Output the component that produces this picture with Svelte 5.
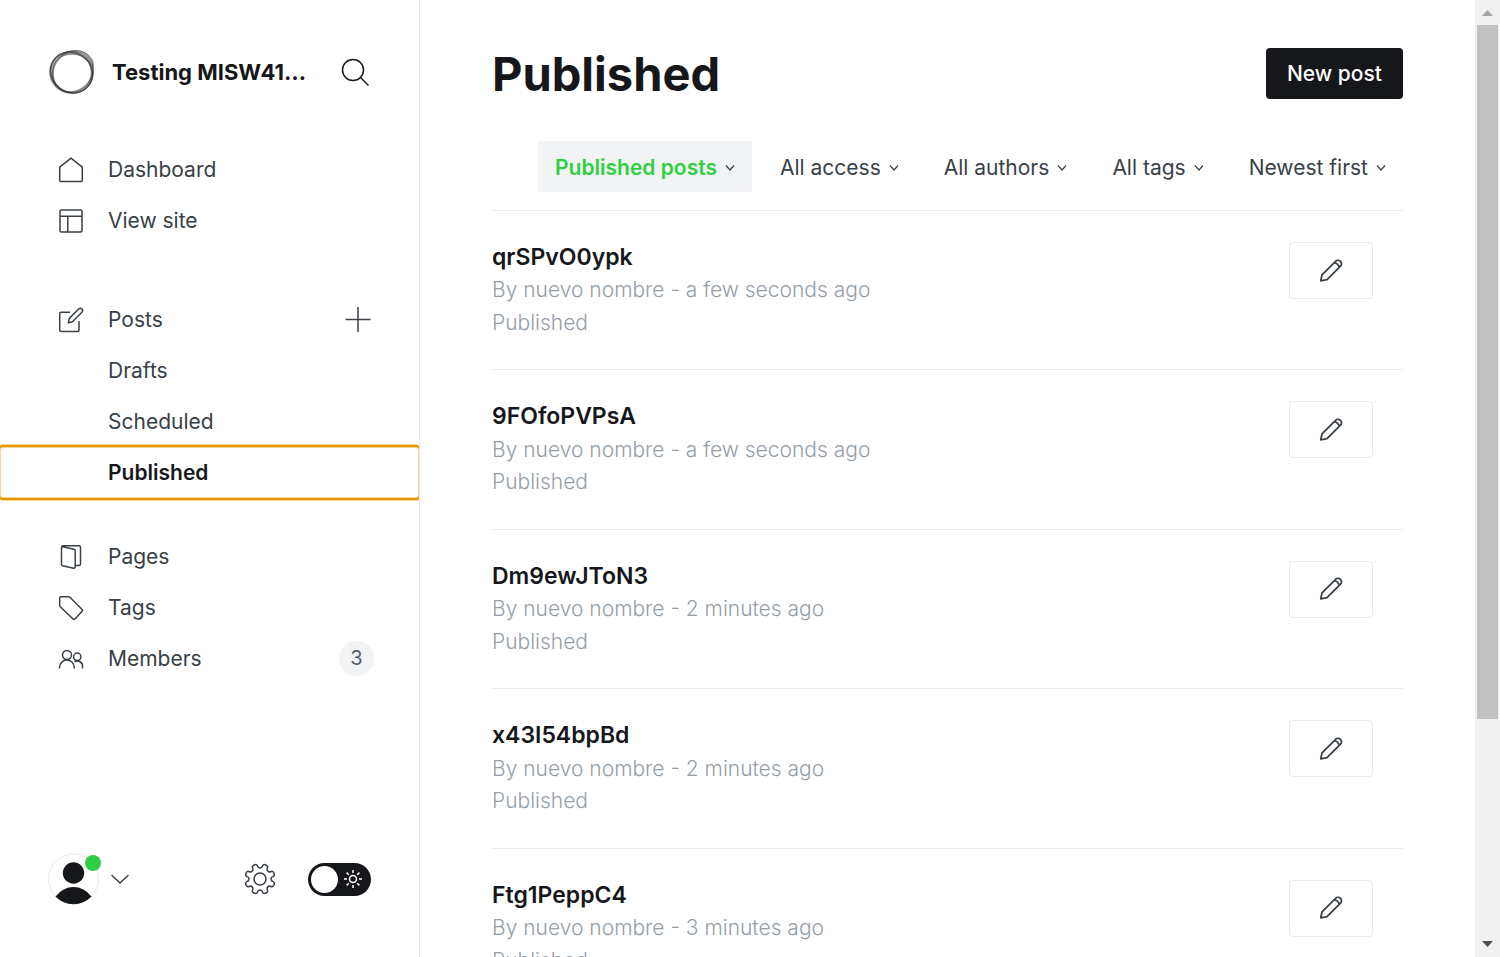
<script>
  const posts = [
    { title: 'qrSPvO0ypk', time: 'a few seconds ago' },
    { title: '9FOfoPVPsA', time: 'a few seconds ago' },
    { title: 'Dm9ewJToN3', time: '2 minutes ago' },
    { title: 'x43I54bpBd', time: '2 minutes ago' },
    { title: 'Ftg1PeppC4', time: '3 minutes ago' }
  ];
  const filters = ['Published posts', 'All access', 'All authors', 'All tags', 'Newest first'];

  // Outline of the eight-toothed settings gear, centred on 16,16
  const gear = (() => {
    const points = [];
    for (let i = 0; i < 8; i++) {
      for (const [offset, radius] of [[-13, 11.6], [-10, 15.4], [10, 15.4], [13, 11.6], [22.5, 11]]) {
        const angle = ((i * 45 + 22.5 + offset) * Math.PI) / 180;
        points.push([16 + radius * Math.cos(angle), 16 + radius * Math.sin(angle)]);
      }
    }
    const mid = (a, b) => `${((a[0] + b[0]) / 2).toFixed(2)} ${((a[1] + b[1]) / 2).toFixed(2)}`;
    let d = `M${mid(points[points.length - 1], points[0])}`;
    points.forEach((p, i) => {
      d += `Q${p[0].toFixed(2)} ${p[1].toFixed(2)} ${mid(p, points[(i + 1) % points.length])}`;
    });
    return d + 'Z';
  })();
</script>

<div class="app">
  <aside class="sidebar">
    <header class="brand">
      <svg class="logo" viewBox="0 0 48 48" fill="none" stroke="#222">
        <path d="M24 3C12 3 1.500 12 1.500 24S11 45.500 24 45.500 45.500 36 45.500 24 36 3 24 3ZM25 6.500C36 6.500 43 14 43 25S35 44 24 44 5 36 5 24 13 6.500 25 6.500Z" fill="#444" fill-opacity=".5" fill-rule="evenodd" stroke-opacity=".4" stroke-width=".7" />
        <ellipse cx="25" cy="23.500" rx="21.800" ry="19" transform="rotate(-48 25 23.500)" stroke-opacity=".45" stroke-width="1.800" />
        <ellipse cx="23.500" cy="24.500" rx="21.600" ry="19.800" transform="rotate(35 23.500 24.500)" stroke-opacity=".65" stroke-width="1.500" />
        <path d="M16 5C25 0 40 2 45 13L45 18C39 9 27 4 16 5Z" fill="#777" fill-opacity=".35" stroke-opacity=".4" stroke-width=".7" />
      </svg>
      <strong class="site">Testing MISW41…</strong>
      <button class="plain search" aria-label="Search">
        <svg width="30" height="30" viewBox="0 0 30 30" fill="none" stroke="#15171a" stroke-width="1.500"><circle cx="13" cy="13" r="10.500" /><path d="M20.500 20.500 28.500 28.500" /></svg>
      </button>
    </header>

    <nav>
      <ul>
        <li><a href="#dashboard"><svg class="icon" viewBox="0 0 26 26"><path d="M1.700 10.200 13 1.200 24.300 10.200V23.200a1.400 1.400 0 0 1-1.400 1.400H3.100a1.400 1.400 0 0 1-1.400-1.400Z" /></svg>Dashboard</a></li>
        <li><a href="#site"><svg class="icon" viewBox="0 0 26 26"><rect x="2" y="2" width="22" height="22" rx="1.500" /><path d="M2 8.300H24M9.800 8.300V24" /></svg>View site</a></li>
      </ul>
      <ul class="posts">
        <li class="with-action">
          <a href="#posts"><svg class="icon" viewBox="0 0 26 26"><path d="M12 5.200H3.200a1.500 1.500 0 0 0-1.500 1.500V23a1.500 1.500 0 0 0 1.500 1.500H19.500A1.500 1.500 0 0 0 21 23V14M10.300 15.700 11.300 11.400 20.700 2a2.200 2.200 0 0 1 3.200 3.200L14.500 14.700Z" /></svg>Posts</a>
          <button class="plain add" aria-label="New post"><svg width="26" height="26" viewBox="0 0 26 26" fill="none" stroke="#394047" stroke-width="1.500"><path d="M.5 12.500H25.500M13 0V25" /></svg></button>
        </li>
        <li><a class="sub" href="#drafts">Drafts</a></li>
        <li><a class="sub" href="#scheduled">Scheduled</a></li>
        <li><a class="sub active" href="#published" aria-current="page">Published</a></li>
      </ul>
      <ul class="content">
        <li><a href="#pages"><svg class="icon" viewBox="0 0 26 26"><path d="M3.600 2.500 16 5.300a1.500 1.500 0 0 1 1.200 1.500V23a1.200 1.200 0 0 1-1.500 1.200L4.700 21.700a1.500 1.500 0 0 1-1.200-1.500V3A1.500 1.500 0 0 1 5 1.700H21A1.500 1.500 0 0 1 22.500 3.200V20a1.500 1.500 0 0 1-1.500 1.500H17.200" /></svg>Pages</a></li>
        <li><a href="#tags"><svg class="icon" viewBox="0 0 26 26"><path d="M3.200 1.700H10.500a2 2 0 0 1 1.400.6L23.900 14.200a1.700 1.700 0 0 1 0 2.400L17.200 23.700a1.700 1.700 0 0 1-2.400 0L2.300 11.700a2 2 0 0 1-.6-1.400V3.200A1.500 1.500 0 0 1 3.200 1.700Z" /></svg>Tags</a></li>
        <li><a href="#members"><svg class="icon" viewBox="0 0 26 26"><circle cx="9" cy="9" r="4.500" /><path d="M1.500 22.500V21.500a7.400 7.400 0 0 1 14.800 0V22.500M16.500 15.800a5.200 5.200 0 0 1 8 5V22.500" /><circle cx="19.300" cy="10.800" r="3.700" /></svg>Members<span class="count">3</span></a></li>
      </ul>
    </nav>

    <footer class="account">
      <button class="plain profile" aria-label="Account menu">
        <svg width="82" height="52" viewBox="0 0 82 52">
          <circle cx="25.500" cy="26" r="25" fill="#fff" stroke="#e9ecee" />
          <circle cx="25.500" cy="20" r="10.700" fill="#15171a" />
          <path d="M7.500 43.500Q15 34 25.500 34T43.500 43.500A25 25 0 0 1 7.500 43.500Z" fill="#15171a" />
          <circle cx="45" cy="10" r="8" fill="#30cf43" />
          <path d="M64 22.500 72 30 80 22.500" fill="none" stroke="#394047" stroke-width="1.500" stroke-linecap="round" stroke-linejoin="round" />
        </svg>
      </button>
      <button class="plain settings" aria-label="Settings">
        <svg width="32" height="32" viewBox="0 0 32 32" fill="none" stroke="#394047" stroke-width="1.500"><path d={gear} /><circle cx="16" cy="16" r="6" /></svg>
      </button>
      <label class="theme">
        <input type="checkbox" aria-label="Dark mode" />
        <svg width="20" height="20" viewBox="0 0 20 20" fill="none" stroke="#fff" stroke-width="1.500"><circle cx="10" cy="10" r="3.500" /><path d="M10 1V4M10 16V19M1 10H4M16 10H19M3.600 3.600 5.800 5.800M14.200 14.200 16.400 16.400M3.600 16.400 5.800 14.200M14.200 5.800 16.400 3.600" /></svg>
      </label>
    </footer>
  </aside>

  <main>
    <header class="heading">
      <h1>Published</h1>
      <a class="new" href="#new">New post</a>
    </header>
    <div class="filters">
      {#each filters as filter, i}
        <button class="filter" class:selected={i === 0}>{filter}<svg width="10" height="8" viewBox="0 0 10 8" fill="none" stroke="#394047" stroke-width="1.200"><path d="M1 1.500 5 6 9 1.500" /></svg></button>
      {/each}
    </div>
    <ol class="list">
      {#each posts as post}
        <li>
          <div>
            <h2>{post.title}</h2>
            <p>By nuevo nombre - {post.time}</p>
            <p>Published</p>
          </div>
          <button class="edit" aria-label="Edit {post.title}">
            <svg width="24" height="24" viewBox="0 0 24 24" fill="none" stroke="#394047" stroke-width="1.800" stroke-linejoin="round"><path d="M1.800 21.800 3 15.900 16.600 2.300a3.300 3.300 0 0 1 4.900 4.900L8 20.600ZM15 4C17.500 3.600 20.300 6.300 20 8.800" /></svg>
          </button>
        </li>
      {/each}
    </ol>
  </main>

  <div class="scrollbar" aria-hidden="true">
    <svg viewBox="0 0 25 25"><path d="M7 16H18L12.500 10Z" fill="#a3a3a3" /></svg>
    <div class="track"><div class="thumb"></div></div>
    <svg viewBox="0 0 25 25"><path d="M7 9H18L12.500 15Z" fill="#505050" /></svg>
  </div>
</div>

<style>
  :global(body) { margin: 0; }
  * { box-sizing: border-box; }
  .app {
    display: grid;
    grid-template-columns: 420px minmax(0, 1fr) 25px;
    height: 100vh;
    overflow: hidden;
    background: #fff;
    color: #394047;
    font: 21px/32px Inter, sans-serif;
  }
  button, input { font: inherit; color: inherit; margin: 0; }
  a { color: inherit; text-decoration: none; }
  ul, ol { list-style: none; margin: 0; padding: 0; }
  svg { display: block; flex: none; }
  .plain { border: 0; padding: 0; background: none; }

  .sidebar { display: flex; flex-direction: column; border-right: 1px solid #e6e9eb; }
  .brand { display: flex; align-items: center; padding: 48px 49px 48px 48px; }
  .logo { width: 48px; height: 48px; }
  .site { flex: 1; margin-left: 16px; font-size: 22px; font-weight: 700; color: #15171a; white-space: nowrap; }
  nav { flex: 1; overflow: hidden; }
  nav a { display: flex; align-items: center; gap: 24px; height: 51px; padding: 0 45px 0 58px; flex: 1; }
  nav a.sub { padding-left: 108px; }
  nav a.active {
    color: #15171a;
    font-weight: 600;
    border-radius: 3px;
    outline: 2px solid #e59700;
    box-shadow: 0 0 0 3px #f6d699, inset 0 0 0 1px #f6d699;
  }
  .icon { width: 26px; height: 26px; fill: none; stroke: #394047; stroke-width: 1.5; stroke-linejoin: round; }
  .posts { margin-top: 48px; }
  .content { margin-top: 33px; }
  .with-action { display: flex; align-items: center; padding-right: 48px; }
  .count {
    width: 35px;
    height: 35px;
    margin-left: auto;
    border-radius: 50%;
    background: #f1f3f4;
    color: #54606c;
    font-size: 20px;
    line-height: 35px;
    text-align: center;
  }
  .account { display: flex; align-items: center; padding: 0 48px 52px; }
  .settings { margin-left: auto; margin-right: 32px; }
  .theme { display: flex; align-items: center; position: relative; width: 63px; height: 33px; padding-left: 35px; border-radius: 17px; background: #15171a; }
  .theme input { appearance: none; position: absolute; left: 3px; top: 3px; width: 27px; height: 27px; border-radius: 50%; background: #fff; }

  main { padding: 48px 72px 0; overflow: hidden; }
  .heading { display: flex; justify-content: space-between; align-items: center; height: 51px; }
  h1 { margin: 0; font-size: 47px; line-height: 54px; font-weight: 700; color: #15171a; }
  .new { padding: 0 21px; border-radius: 4px; background: #15171a; color: #fff; font-weight: 500; line-height: 51px; }
  .filters { display: flex; justify-content: flex-end; gap: 11px; padding: 42px 0 18px; }
  .filter { display: flex; align-items: center; gap: 8px; height: 51px; padding: 3px 17px 0; border: 0; border-radius: 3px; background: none; white-space: nowrap; }
  .filter.selected { background: #f1f3f4; color: #30cf43; font-weight: 600; }
  .list li { display: flex; justify-content: space-between; align-items: flex-start; padding: 30px 30px 30px 0; border-top: 1px solid #e9ecef; }
  h2 { margin: 0; font-size: 23px; line-height: 1.45; font-weight: 600; color: #15171a; }
  p { margin: 0; line-height: 1.55; font-weight: 350; color: #949ea7; }
  .edit { display: grid; place-items: center; width: 84px; height: 57px; padding: 0; margin-top: 1px; border: 1px solid #e6e9eb; border-radius: 4px; background: #fff; }

  .scrollbar { display: flex; flex-direction: column; background: #f1f1f1; }
  .scrollbar svg { width: 25px; height: 25px; }
  .track { flex: 1; padding: 0 2px; }
  .thumb { height: 76.5%; background: #c1c1c1; }
</style>
